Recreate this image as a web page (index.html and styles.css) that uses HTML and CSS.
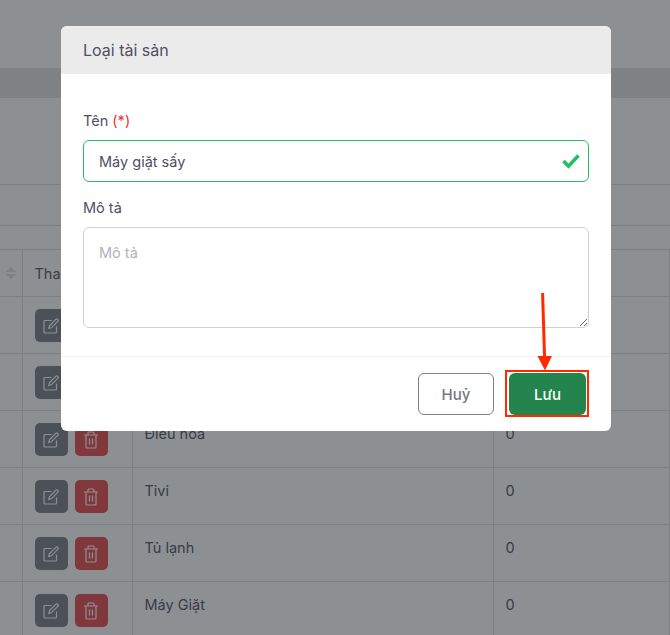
FILE: index.html
```html
<!DOCTYPE html>
<html>
<head>
    <meta charset="utf-8">
    <title>Loại tài sản</title>
    <link rel="stylesheet" href="styles.css">
</head>
<body>
    <div class="page">
        <div class="topbar"></div>
        <div class="band"></div>
        <div class="filters"></div>
        <div class="tools"></div>
        <div class="spacer"></div>
        <table class="grid">
            <colgroup>
                <col class="col-sort">
                <col class="col-action">
                <col class="col-name">
                <col>
            </colgroup>
            <thead>
                <tr>
                    <th class="sort-cell">
                        <svg class="sort-icon" width="10" height="12" viewBox="0 0 10 12"><path d="M5 0l5 5H0zM5 12L0 7h10z"/></svg>
                    </th>
                    <th>Thao tác</th>
                    <th></th>
                    <th></th>
                </tr>
            </thead>
            <tbody id="rows"></tbody>
        </table>
    </div>

    <div class="overlay"></div>

    <div class="modal">
        <div class="modal-head">Loại tài sản</div>
        <div class="modal-body">
            <label class="field-label">Tên <span class="req">(*)</span></label>
            <div class="input-wrap">
                <input class="input valid" type="text" value="Máy giặt sấy">
                <svg class="check" width="18" height="16" viewBox="0 0 18 16"><path d="M1.500 8l5 5.200L16.500 2.500" fill="none" stroke="#22c063" stroke-width="3.600"/></svg>
            </div>
            <label class="field-label second">Mô tả</label>
            <textarea class="input area" placeholder="Mô tả"></textarea>
        </div>
        <div class="modal-foot">
            <button class="btn btn-cancel">Huỷ</button>
            <button class="btn btn-save">Lưu</button>
        </div>
    </div>

    <!-- annotation drawn over the screenshot -->
    <div class="mark-box"></div>
    <svg class="mark-arrow" width="24" height="80" viewBox="0 0 24 80">
        <path d="M10.600 1l2 66" fill="none" stroke="#ff2a00" stroke-width="3"/>
        <path d="M5.500 64h14.500l-7 14.500z" fill="#ff2a00"/>
    </svg>

    <script>
    var names = ['', '', 'Điều hoà', 'Tivi', 'Tủ lạnh', 'Máy Giặt'];
    var editIcon = '<svg width="16" height="16" viewBox="0 0 16 16" fill="none" stroke="#fff" stroke-width="1.2"><path d="M13.500 8.500v5.500a1 1 0 0 1-1 1H2a1 1 0 0 1-1-1V3.500a1 1 0 0 1 1-1h6.500"/><path d="M5.800 10.400l.6-2.600L13 1.200a1 1 0 0 1 1.400 0l.6.6a1 1 0 0 1 0 1.400L8.400 9.800z"/></svg>';
    var trashIcon = '<svg width="16" height="18" viewBox="0 0 16 18" fill="none" stroke="#fff" stroke-width="1.2"><path d="M1 4h14M5 4V2a1 1 0 0 1 1-1h4a1 1 0 0 1 1 1v2"/><path d="M3 4v12a1 1 0 0 0 1 1h8a1 1 0 0 0 1-1V4"/><path d="M6.500 7.500v6M9.500 7.500v6"/></svg>';
    var output = '';
    for(var i=0; i < names.length; i++){
        output += "<tr><td></td><td class='actions'><span class='act act-edit'>" + editIcon + "</span><span class='act act-del'>" + trashIcon + "</span></td>";
        output += "<td>" + names[i] + "</td><td>0</td></tr>";
    }
    document.getElementById('rows').innerHTML = output;
    </script>
</body>
</html>
```

FILE: styles.css
```css
html, body {
    margin: 0;
    height: 635px;
    overflow: hidden;
}
body {
    background: #fff;
    font-family: Inter, "Liberation Sans", sans-serif;
    font-size: 14.5px;
    color: #4f5063;
}
.page {
    width: 670px;
}
.topbar {
    height: 68px;
}
.band {
    height: 30px;
    background: #e2e2e3;
}
.filters {
    box-sizing: border-box;
    height: 87px;
    border-bottom: 1px solid #dbdde3;
}
.tools {
    height: 40px;
    border-bottom: 1px solid #dbdde3;
}
.spacer {
    height: 23px;
}
.grid {
    width: 670px;
    table-layout: fixed;
    border-collapse: collapse;
    font-size: 14.5px;
    color: #55566a;
}
.col-sort { width: 22px; }
.col-action { width: 110px; }
.col-name { width: 361px; }
.grid th, .grid td {
    border: 1px solid #dcdee4;
    border-left-width: 0;
    padding: 14px 12px 8px;
    height: 34px;
    text-align: left;
    vertical-align: top;
    font-weight: 400;
    box-sizing: content-box;
}
.grid th {
    padding: 11px 12px;
    height: 24px;
    vertical-align: middle;
}
.grid th.sort-cell {
    padding: 0;
}
.sort-icon {
    display: block;
    margin-left: 6px;
    fill: #dfe0e3;
}
.actions {
    white-space: nowrap;
}
.grid td.actions {
    padding: 12px 12px 0;
    height: 44px;
}
.act {
    display: inline-flex;
    align-items: center;
    justify-content: center;
    width: 33px;
    height: 33px;
    border-radius: 5px;
    margin-right: 7px;
    vertical-align: top;
}
.act-edit {
    background: #7a8187;
}
.act-del {
    background: #e64e53;
}
.overlay {
    position: absolute;
    inset: 0;
    background: rgba(28, 33, 38, 0.5);
}
.modal {
    position: absolute;
    left: 61px;
    top: 26px;
    width: 550px;
    height: 405px;
    background: #fff;
    border-radius: 6px;
    overflow: hidden;
    display: flex;
    flex-direction: column;
}
.modal-head {
    height: 48px;
    line-height: 48px;
    padding: 0 22px;
    background: #ebebeb;
    font-size: 16px;
}
.modal-body {
    flex: 1;
    padding: 37px 22px 0;
}
.field-label {
    display: block;
    line-height: 20px;
    margin-bottom: 9px;
}
.field-label.second {
    margin-top: 16px;
}
.req {
    color: #f0343c;
}
.input-wrap {
    position: relative;
}
.input {
    display: block;
    width: 100%;
    box-sizing: border-box;
    border: 1px solid #d0d1d7;
    border-radius: 6px;
    padding: 0 15px;
    font-family: inherit;
    font-size: 14.5px;
    color: #4f5063;
    outline: none;
}
.input.valid {
    height: 42px;
    border-color: #27bd63;
}
.check {
    position: absolute;
    right: 9px;
    top: 13px;
}
.area {
    height: 101px;
    padding-top: 15px;
    resize: vertical;
    line-height: 20px;
}
.area::placeholder {
    color: #b2b3bd;
}
.modal-foot {
    height: 75px;
    box-sizing: border-box;
    border-top: 1px solid #f0f0f2;
    padding: 16px 25px 0 0;
    display: flex;
    justify-content: flex-end;
    gap: 15px;
}
.btn {
    height: 42px;
    border-radius: 6px;
    font-family: inherit;
    font-size: 15px;
    font-weight: 500;
}
.btn-cancel {
    width: 76px;
    background: #fff;
    border: 1px solid #7f8083;
    color: #77787e;
}
.btn-save {
    width: 77px;
    background: #23854d;
    border: 0;
    color: #fff;
}
.mark-box {
    position: absolute;
    left: 505px;
    top: 370px;
    width: 84px;
    height: 47px;
    box-sizing: border-box;
    border: 2px solid #ff2a00;
}
.mark-arrow {
    position: absolute;
    left: 532px;
    top: 292px;
}
```
